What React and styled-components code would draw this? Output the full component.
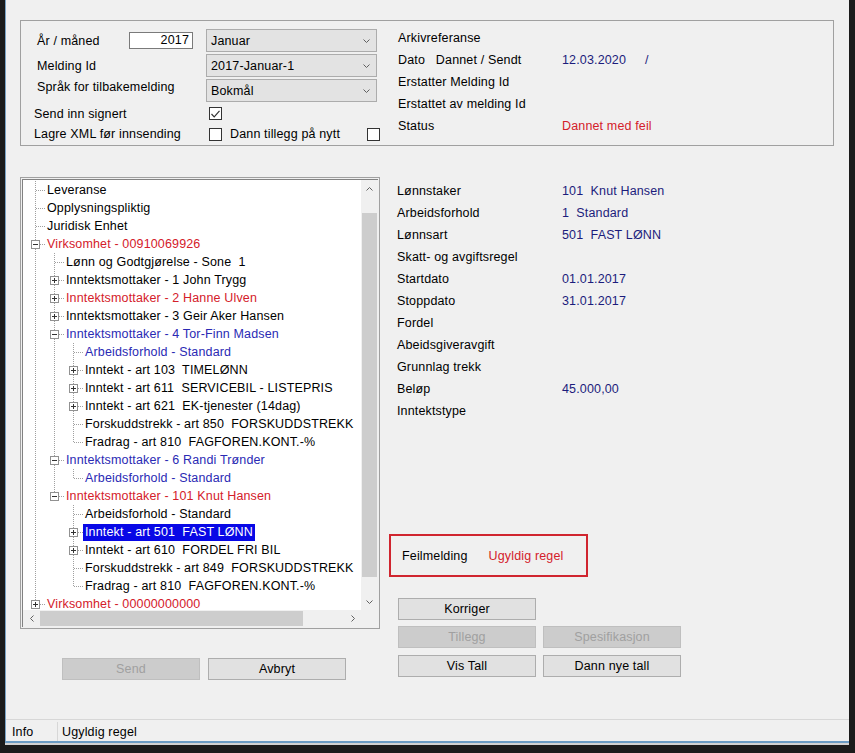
import React from 'react'
import styled, { createGlobalStyle } from 'styled-components'

const GlobalStyle = createGlobalStyle`
  html, body {
    margin: 0;
    padding: 0;
    background: #1b1b1b;
  }
  body {
    font-family: 'Liberation Sans', Arial, sans-serif;
    font-size: 12.5px;
    letter-spacing: 0.15px;
    color: #000;
  }
`

const RED = '#d4202a'
const BLUE = '#2a2ab4'
const NAVY = '#1c1c7c'

const Frame = styled.div`
  width: 855px;
  height: 753px;
  box-sizing: border-box;
  padding: 0 6px 10px 5px;
  background: #1b1b1b;
`
const Window = styled.div`
  height: 743px;
  box-sizing: border-box;
  background: #f0f0f0;
  border-left: 1px solid #7aa3c6;
  border-bottom: 2px solid #6b9bc3;
  box-shadow: 0 2px 0 #d2d2d2;
  display: flex;
  flex-direction: column;
`
const Content = styled.div`
  flex: 1;
  padding: 20px 15px 0 14px;
`

/* ---------- top group ---------- */
const Group = styled.div`
  height: 126px;
  box-sizing: border-box;
  border: 1px solid #a0a0a0;
  display: flex;
`
const LeftBlock = styled.div`
  width: 377px;
  padding-top: 8px;
`
const FormRow = styled.div`
  display: flex;
  align-items: center;
  height: ${p => p.$h || 23}px;
  margin-bottom: ${p => p.$mb || 0}px;
  padding-left: ${p => p.$pl || 16}px;
`
const Label = styled.span`
  width: ${p => p.$w}px;
  flex: none;
  white-space: pre;
  margin-bottom: ${p => p.$raise || 0}px;
`
const TextBox = styled.div`
  width: 64px;
  height: 17px;
  box-sizing: border-box;
  border: 1px solid #7a7a7a;
  background: #fff;
  margin-right: 13px;
  text-align: right;
  padding-right: 3px;
  line-height: 15px;
`
const Combo = styled.div`
  width: 171px;
  height: 23px;
  box-sizing: border-box;
  border: 1px solid #acacac;
  background: #e3e3e3;
  display: flex;
  align-items: center;
  justify-content: space-between;
  padding: 0 6px 0 4px;
`
const Check = styled.span`
  width: 13px;
  height: 13px;
  flex: none;
  box-sizing: border-box;
  border: 1px solid #333;
  background: #fff;
  display: flex;
  align-items: center;
  justify-content: center;
  margin-right: ${p => p.$mr || 0}px;
`
const RightBlock = styled.div`
  flex: 1;
  padding-top: 6px;
`
const InfoRow = styled.div`
  display: flex;
  align-items: center;
  height: 22px;
  white-space: pre;
`
const Value = styled.span`
  color: ${p => p.$red ? RED : NAVY};
  white-space: pre;
  margin-left: ${p => p.$ml || 0}px;
`

/* ---------- main area ---------- */
const Main = styled.div`
  margin-top: 31px;
  display: grid;
  grid-template-columns: 360px 1fr;
`
const TreeBox = styled.div`
  height: 452px;
  box-sizing: border-box;
  border: 1px solid #a0a0a0;
  padding: 1px;
  display: flex;
`
const TreeInner = styled.div`
  flex: 1;
  border-top: 1px solid #828282;
  border-left: 1px solid #828282;
  display: grid;
  grid-template-columns: 1fr 17px;
  grid-template-rows: 1fr 17px;
  min-height: 0;
`
const TreeArea = styled.div`
  background: #fff;
  overflow: hidden;
  padding-top: 1px;
`
const Row = styled.div`
  display: flex;
  align-items: center;
  height: 18px;
  padding-left: 3px;
  white-space: pre;
`
const Guide = styled.svg`
  flex: none;
  display: block;
`
const Node = styled.span`
  padding: 0 2px;
  line-height: 17px;
  color: ${p => p.$sel ? '#fff' : p.$c === 'r' ? RED : p.$c === 'b' ? BLUE : '#000'};
  background: ${p => p.$sel ? '#0808e6' : 'transparent'};
`
const VScroll = styled.div`
  background: #f0f0f0;
  display: flex;
  flex-direction: column;
`
const HScroll = styled.div`
  background: #f0f0f0;
  display: flex;
`
const Arrow = styled.div`
  width: 17px;
  height: 17px;
  flex: none;
  display: flex;
  align-items: center;
  justify-content: center;
`
const VThumb = styled.div`
  margin: 16px 1px 0;
  height: 364px;
  background: #cdcdcd;
`
const HThumb = styled.div`
  margin: 1px 0;
  width: 263px;
  background: #cdcdcd;
`
const Spacer = styled.div`
  flex: 1;
`
const Corner = styled.div`
  background: #f0f0f0;
`

const BtnRow = styled.div`
  display: flex;
  gap: ${p => p.$gap || 7}px;
  margin-top: ${p => p.$mt || 0}px;
  padding-left: ${p => p.$pl || 0}px;
`
const Button = styled.div`
  width: 138px;
  height: 22px;
  box-sizing: border-box;
  border: 1px solid ${p => p.$off ? '#bfbfbf' : '#adadad'};
  background: ${p => p.$off ? '#cccccc' : '#e1e1e1'};
  color: ${p => p.$off ? '#a0a0a0' : '#000'};
  display: flex;
  align-items: center;
  justify-content: center;
`

const RightCol = styled.div`
  padding-left: 9px;
`
const Details = styled.div`
  padding: 3px 0 0 8px;
`
const DetailRow = styled.div`
  display: flex;
  align-items: center;
  height: 22px;
`
const ErrorBox = styled.div`
  margin-top: 112px;
  width: 199px;
  height: 43px;
  box-sizing: border-box;
  border: 2px solid #d0252f;
  display: flex;
  align-items: center;
  padding-left: 11px;
  gap: 21px;
`
const ActionBlock = styled.div`
  margin-top: 21px;
  padding-left: 9px;
`

/* ---------- status bar ---------- */
const StatusBar = styled.div`
  height: 22px;
  box-sizing: border-box;
  border-top: 1px solid #d7d7d7;
  display: flex;
  align-items: stretch;
`
const StatusCell = styled.div`
  display: flex;
  align-items: center;
  padding-left: ${p => p.$pl}px;
  width: ${p => p.$w ? p.$w + 'px' : 'auto'};
  border-right: ${p => p.$sep ? '1px solid #d7d7d7' : 'none'};
  margin-top: 2px;
`

const Chevron = ({ dir = 'down', color = '#606060' }) => {
  const pts = {
    down: '0.5,0.5 3.5,3.5 6.5,0.5',
    up: '0.5,3.5 3.5,0.5 6.5,3.5',
    left: '3.5,0.5 0.5,3.5 3.5,6.5',
    right: '0.5,0.5 3.5,3.5 0.5,6.5',
  }[dir]
  const vert = dir === 'up' || dir === 'down'
  return (
    <svg width={vert ? 7 : 4} height={vert ? 4 : 7} style={{ display: 'block' }}>
      <polyline points={pts} fill="none" stroke={color} strokeWidth="1" />
    </svg>
  )
}

const CheckMark = () => (
  <svg width="9" height="8">
    <polyline points="0.5,4 3.2,6.8 8.5,0.8" fill="none" stroke="#333" strokeWidth="1.2" />
  </svg>
)

const tree = [
  { t: 'Leveranse', lv: 0 },
  { t: 'Opplysningspliktig', lv: 0 },
  { t: 'Juridisk Enhet', lv: 0 },
  { t: 'Virksomhet - 00910069926', lv: 0, c: 'r', exp: '-' },
  { t: 'Lønn og Godtgjørelse - Sone  1', lv: 1 },
  { t: 'Inntektsmottaker - 1 John Trygg', lv: 1, exp: '+' },
  { t: 'Inntektsmottaker - 2 Hanne Ulven', lv: 1, c: 'r', exp: '+' },
  { t: 'Inntektsmottaker - 3 Geir Aker Hansen', lv: 1, exp: '+' },
  { t: 'Inntektsmottaker - 4 Tor-Finn Madsen', lv: 1, c: 'b', exp: '-' },
  { t: 'Arbeidsforhold - Standard', lv: 2, c: 'b' },
  { t: 'Inntekt - art 103  TIMELØNN', lv: 2, exp: '+' },
  { t: 'Inntekt - art 611  SERVICEBIL - LISTEPRIS', lv: 2, exp: '+' },
  { t: 'Inntekt - art 621  EK-tjenester (14dag)', lv: 2, exp: '+' },
  { t: 'Forskuddstrekk - art 850  FORSKUDDSTREKK', lv: 2 },
  { t: 'Fradrag - art 810  FAGFOREN.KONT.-%', lv: 2 },
  { t: 'Inntektsmottaker - 6 Randi Trønder', lv: 1, c: 'b', exp: '-' },
  { t: 'Arbeidsforhold - Standard', lv: 2, c: 'b' },
  { t: 'Inntektsmottaker - 101 Knut Hansen', lv: 1, c: 'r', exp: '-' },
  { t: 'Arbeidsforhold - Standard', lv: 2 },
  { t: 'Inntekt - art 501  FAST LØNN', lv: 2, exp: '+', sel: true },
  { t: 'Inntekt - art 610  FORDEL FRI BIL', lv: 2, exp: '+' },
  { t: 'Forskuddstrekk - art 849  FORSKUDDSTREKK', lv: 2 },
  { t: 'Fradrag - art 810  FAGFOREN.KONT.-%', lv: 2 },
  { t: 'Virksomhet - 00000000000', lv: 0, c: 'r', exp: '+' },
]

// is there a later row at level `lv` before the branch closes?
function continues(i, lv) {
  for (let j = i + 1; j < tree.length; j++) {
    if (tree[j].lv < lv) return false
    if (tree[j].lv === lv) return true
  }
  return false
}

const DOT = '#a0a0a0'

function GuideCell({ kind, exp }) {
  // kind: 'pass' | 'mid' | 'last' | 'none'
  return (
    <Guide width="19" height="18">
      {kind === 'pass' && (
        <line x1="9.5" y1="0" x2="9.5" y2="18" stroke={DOT} strokeDasharray="1 1" />
      )}
      {(kind === 'mid' || kind === 'last') && (
        <>
          <line x1="9.5" y1="0" x2="9.5" y2={kind === 'mid' ? 18 : 9} stroke={DOT} strokeDasharray="1 1" />
          <line x1="10" y1="9.5" x2="19" y2="9.5" stroke={DOT} strokeDasharray="1 1" />
        </>
      )}
      {exp && (
        <>
          <rect x="5.5" y="5.5" width="8" height="8" fill="#fff" stroke="#919191" />
          <line x1="7" y1="9.5" x2="12" y2="9.5" stroke="#333" />
          {exp === '+' && <line x1="9.5" y1="7" x2="9.5" y2="12" stroke="#333" />}
        </>
      )}
    </Guide>
  )
}

function TreeRow({ item, i }) {
  const cells = []
  for (let a = 0; a < item.lv; a++) {
    let anc = i
    while (anc >= 0 && tree[anc].lv !== a) anc--
    cells.push(<GuideCell key={a} kind={continues(anc, a) ? 'pass' : 'none'} />)
  }
  cells.push(<GuideCell key="own" kind={continues(i, item.lv) ? 'mid' : 'last'} exp={item.exp} />)
  return (
    <Row>
      {cells}
      <Node $c={item.c} $sel={item.sel}>{item.t}</Node>
    </Row>
  )
}

const details = [
  ['Lønnstaker', '101  Knut Hansen'],
  ['Arbeidsforhold', '1  Standard'],
  ['Lønnsart', '501  FAST LØNN'],
  ['Skatt- og avgiftsregel', ''],
  ['Startdato', '01.01.2017'],
  ['Stoppdato', '31.01.2017'],
  ['Fordel', ''],
  ['Abeidsgiveravgift', ''],
  ['Grunnlag trekk', ''],
  ['Beløp', '45.000,00'],
  ['Inntektstype', ''],
]

export default function App() {
  return (
    <Frame>
      <GlobalStyle />
      <Window>
        <Content>
          <Group>
            <LeftBlock>
              <FormRow $mb={2}>
                <Label $w={92}>År / måned</Label>
                <TextBox>2017</TextBox>
                <Combo>Januar<Chevron /></Combo>
              </FormRow>
              <FormRow $mb={2}>
                <Label $w={169}>Melding Id</Label>
                <Combo>2017-Januar-1<Chevron /></Combo>
              </FormRow>
              <FormRow $mb={2}>
                <Label $w={169} $raise={7}>Språk for tilbakemelding</Label>
                <Combo>Bokmål<Chevron /></Combo>
              </FormRow>
              <FormRow $h={19} $pl={13}>
                <Label $w={175}>Send inn signert</Label>
                <Check><CheckMark /></Check>
              </FormRow>
              <FormRow $h={22} $pl={13}>
                <Label $w={175}>Lagre XML før innsending</Label>
                <Check $mr={8} />
                <Label $w={137}>Dann tillegg på nytt</Label>
                <Check />
              </FormRow>
            </LeftBlock>
            <RightBlock>
              <InfoRow><Label $w={164}>Arkivreferanse</Label></InfoRow>
              <InfoRow>
                <Label $w={164}>Dato   Dannet / Sendt</Label>
                <Value>12.03.2020</Value>
                <Value $ml={19}>/</Value>
              </InfoRow>
              <InfoRow><Label $w={164}>Erstatter Melding Id</Label></InfoRow>
              <InfoRow><Label $w={164}>Erstattet av melding Id</Label></InfoRow>
              <InfoRow>
                <Label $w={164}>Status</Label>
                <Value $red>Dannet med feil</Value>
              </InfoRow>
            </RightBlock>
          </Group>

          <Main>
            <div>
              <TreeBox>
                <TreeInner>
                  <TreeArea>
                    {tree.map((item, i) => <TreeRow key={i} item={item} i={i} />)}
                  </TreeArea>
                  <VScroll>
                    <Arrow><Chevron dir="up" /></Arrow>
                    <VThumb />
                    <Spacer />
                    <Arrow><Chevron dir="down" /></Arrow>
                  </VScroll>
                  <HScroll>
                    <Arrow><Chevron dir="left" /></Arrow>
                    <HThumb />
                    <Spacer />
                    <Arrow><Chevron dir="right" /></Arrow>
                  </HScroll>
                  <Corner />
                </TreeInner>
              </TreeBox>
              <BtnRow $mt={29} $pl={42} $gap={8}>
                <Button $off>Send</Button>
                <Button>Avbryt</Button>
              </BtnRow>
            </div>

            <RightCol>
              <Details>
                {details.map(([l, v]) => (
                  <DetailRow key={l}>
                    <Label $w={165}>{l}</Label>
                    {v && <Value>{v}</Value>}
                  </DetailRow>
                ))}
              </Details>
              <ErrorBox>
                <span>Feilmelding</span>
                <Value $red>Ugyldig regel</Value>
              </ErrorBox>
              <ActionBlock>
                <BtnRow><Button>Korriger</Button></BtnRow>
                <BtnRow $mt={6}>
                  <Button $off>Tillegg</Button>
                  <Button $off>Spesifikasjon</Button>
                </BtnRow>
                <BtnRow $mt={7}>
                  <Button>Vis Tall</Button>
                  <Button>Dann nye tall</Button>
                </BtnRow>
              </ActionBlock>
            </RightCol>
          </Main>
        </Content>

        <StatusBar>
          <StatusCell $pl={6} $w={45} $sep>Info</StatusCell>
          <StatusCell $pl={4}>Ugyldig regel</StatusCell>
        </StatusBar>
      </Window>
    </Frame>
  )
}
